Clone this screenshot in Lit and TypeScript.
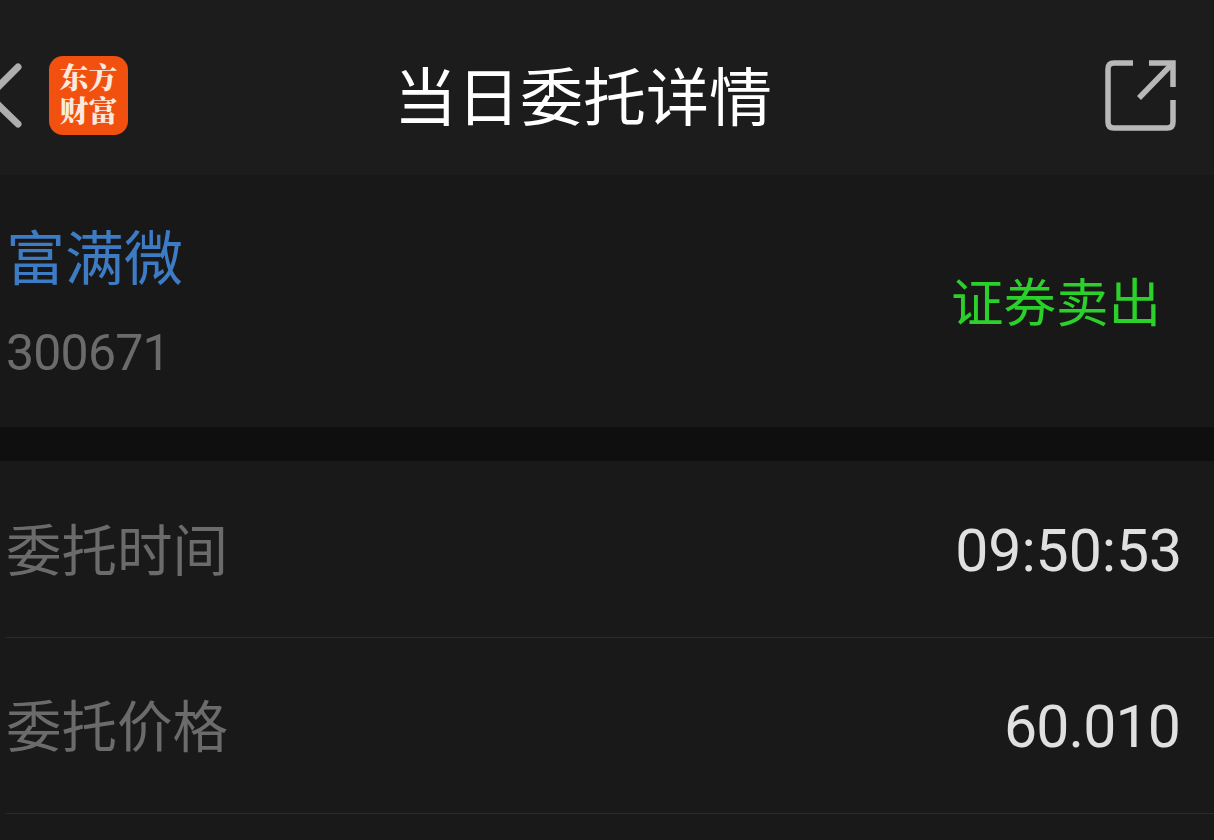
import { LitElement, html, css } from "lit";
import { customElement } from "lit/decorators.js";

@customElement("app-root")
export class AppRoot extends LitElement {
  static styles = css`
    :host {
      display: block;
      width: 1214px;
      height: 840px;
      overflow: hidden;
      background: #191919;
      font-family: Roboto, "Noto Sans CJK SC", sans-serif;
    }
    .header {
      height: 175px;
      box-sizing: border-box;
      padding-top: 16px;
      background: #1c1c1c;
      display: grid;
      grid-template-columns: 394px auto 1fr;
      align-items: center;
    }
    .left {
      display: flex;
      align-items: center;
      gap: 25px;
    }
    .back {
      display: block;
      width: 24px;
      height: 70px;
    }
    .logo {
      width: 79px;
      height: 79px;
      box-sizing: border-box;
      padding-bottom: 5px;
      border-radius: 14px;
      background: #f2500f;
      color: #fbe9dd;
      font-family: "Noto Serif CJK SC", "Noto Sans CJK SC", sans-serif;
      font-weight: 900;
      font-size: 29px;
      line-height: 33px;
      display: flex;
      align-items: center;
      justify-content: center;
      text-align: center;
    }
    .title {
      font-size: 63px;
      line-height: 80px;
      color: #fff;
      font-family: "Noto Sans CJK SC", sans-serif;
      margin-top: -5px;
    }
    .right {
      display: flex;
      justify-content: flex-end;
      padding-right: 38px;
    }
    .share {
      display: block;
      width: 71px;
      height: 71px;
    }
    .card {
      height: 252px;
      box-sizing: border-box;
      padding: 0 53px 0 6px;
      background: #181818;
      display: flex;
      align-items: center;
      justify-content: space-between;
    }
    .name {
      font-size: 59px;
      line-height: 70px;
      color: #3d7cc4;
      font-family: "Noto Sans CJK SC", sans-serif;
      margin-top: -2px;
    }
    .code {
      font-size: 50px;
      line-height: 56px;
      letter-spacing: -0.8px;
      color: #6b6b6b;
      margin-top: 35px;
    }
    .side {
      font-size: 52.5px;
      line-height: 60px;
      color: #2bd02b;
      font-family: "Noto Sans CJK SC", sans-serif;
      margin-top: -4px;
    }
    .gap {
      height: 34px;
      background: #0f0f0f;
    }
    .rows {
      padding-top: 1px;
    }
    .row {
      height: 176px;
      box-sizing: border-box;
      margin-left: 5px;
      padding: 0 34px 0 1px;
      border-bottom: 1px solid #2a2a2a;
      display: flex;
      align-items: center;
      justify-content: space-between;
    }
    .label {
      font-size: 55.5px;
      line-height: 64px;
      color: #6b6b6b;
      font-family: "Noto Sans CJK SC", sans-serif;
      margin-top: -6px;
    }
    .value {
      font-size: 59px;
      line-height: 64px;
      color: #e0e0e0;
      margin-top: 2px;
    }
    .time {
      margin-right: -2px;
      letter-spacing: -0.1px;
    }
    .price {
      letter-spacing: -0.9px;
    }
  `;

  render() {
    return html`
      <div class="header">
        <div class="left">
          <svg class="back" viewBox="0 0 24 70">
            <path d="M18 6 L-11 35 L18 63" fill="none" stroke="#aeaeae" stroke-width="7" stroke-linecap="round" />
          </svg>
          <div class="logo"><span>东方<br />财富</span></div>
        </div>
        <div class="title">当日委托详情</div>
        <div class="right">
          <svg class="share" viewBox="0 0 71 71">
            <path d="M28 3 H9 Q3 3 3 9 V62 Q3 68 9 68 H62 Q68 68 68 62 V40" fill="none" stroke="#b8b8b8" stroke-width="5.5" />
            <path d="M44 3 H68 V27" fill="none" stroke="#b8b8b8" stroke-width="5.5" />
            <path d="M67 4 L34 38" fill="none" stroke="#b8b8b8" stroke-width="5.5" />
          </svg>
        </div>
      </div>
      <div class="card">
        <div>
          <div class="name">富满微</div>
          <div class="code">300671</div>
        </div>
        <div class="side">证券卖出</div>
      </div>
      <div class="gap"></div>
      <div class="rows">
        <div class="row">
          <div class="label">委托时间</div>
          <div class="value time">09:50:53</div>
        </div>
        <div class="row">
          <div class="label">委托价格</div>
          <div class="value price">60.010</div>
        </div>
      </div>
    `;
  }
}
